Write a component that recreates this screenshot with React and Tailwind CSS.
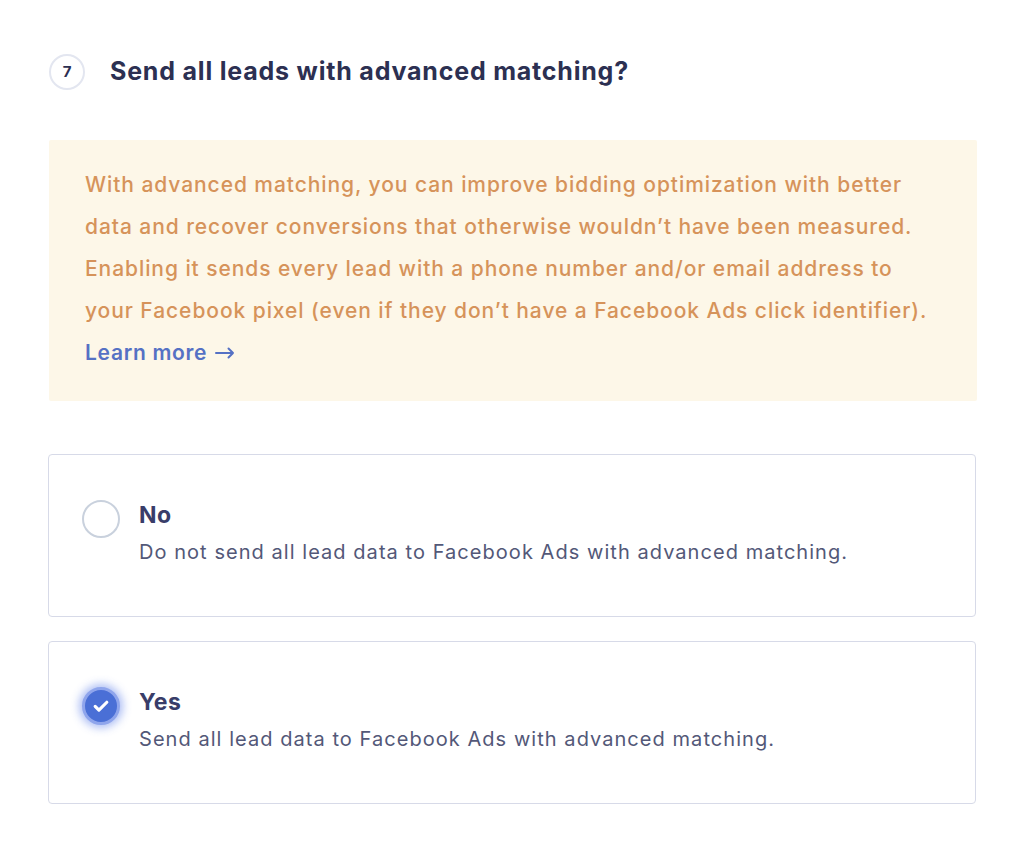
import React from 'react';

const options = [
  {
    title: 'No',
    description: 'Do not send all lead data to Facebook Ads with advanced matching.',
    checked: false
  },
  {
    title: 'Yes',
    description: 'Send all lead data to Facebook Ads with advanced matching.',
    checked: true
  }
];

const Radio = ({ checked }) => {
  if (!checked) {
    return <div className="w-[38px] h-[38px] shrink-0 rounded-full border-2 border-[#c9d1dd] bg-white" />;
  }
  return (
    <div className="w-[38px] h-[38px] shrink-0 rounded-full bg-[#4a6fd6] border-[3px] border-[#8fa5ec] shadow-[0_0_8px_3px_rgba(74,111,230,0.45)] flex items-center justify-center">
      <svg width="20" height="20" viewBox="0 0 24 24" fill="none" stroke="white" strokeWidth="3.8" strokeLinecap="round" strokeLinejoin="round">
        <path d="M5 12.5l4.5 4.5L19 7.5" />
      </svg>
    </div>
  );
};

const App = () => {
  return (
    <div className="min-h-screen bg-white font-['Inter',sans-serif] px-12 pt-[53px]">
      <div className="flex items-center gap-[25px]">
        <div className="w-9 h-9 ml-px rounded-full border-2 border-[#e3e6f0] flex items-center justify-center text-[15px] font-bold text-[#2c3052]">
          7
        </div>
        <h2 className="text-[25px] font-bold text-[#2c3052] tracking-[0.8px]">Send all leads with advanced matching?</h2>
      </div>

      <div className="mt-[49px] ml-px mr-[-1px] bg-[#fdf7e8] rounded-[2px] pl-9 pr-6 pt-6 pb-[27px]">
        <p className="text-[21px] leading-[42px] font-medium text-[#d6935a] tracking-[0.93px] whitespace-nowrap">
          With advanced matching, you can improve bidding optimization with better<br />
          data and recover conversions that otherwise wouldn’t have been measured.<br />
          Enabling it sends every lead with a phone number and/or email address to<br />
          your Facebook pixel (even if they don’t have a Facebook Ads click identifier).
        </p>
        <a href="#" className="flex items-center gap-2 text-[21px] leading-[42px] font-semibold text-[#5571c4] tracking-[0.7px]">
          Learn more
          <svg width="20" height="12" viewBox="0 0 20 12" fill="none" stroke="#5571c4" strokeWidth="2" strokeLinecap="round" strokeLinejoin="round">
            <path d="M1 6h17M13.5 1.5L18 6l-4.5 4.5" />
          </svg>
        </a>
      </div>

      <div className="mt-[53px] flex flex-col gap-6">
        {options.map((option) => (
          <div key={option.title} className="flex items-start gap-[19px] border border-[#d7dae8] rounded-[4px] pl-[33px] pr-6 pt-[45px] pb-[49px] bg-white">
            <div className="mt-0">
              <Radio checked={option.checked} />
            </div>
            <div className="flex flex-col">
              <span className="text-[23px] leading-[30px] font-bold text-[#393d69] tracking-[0.5px]">{option.title}</span>
              <span className="mt-[7px] text-[20px] leading-[30px] text-[#535878] tracking-[1.05px]">{option.description}</span>
            </div>
          </div>
        ))}
      </div>
    </div>
  );
};

export default App;
